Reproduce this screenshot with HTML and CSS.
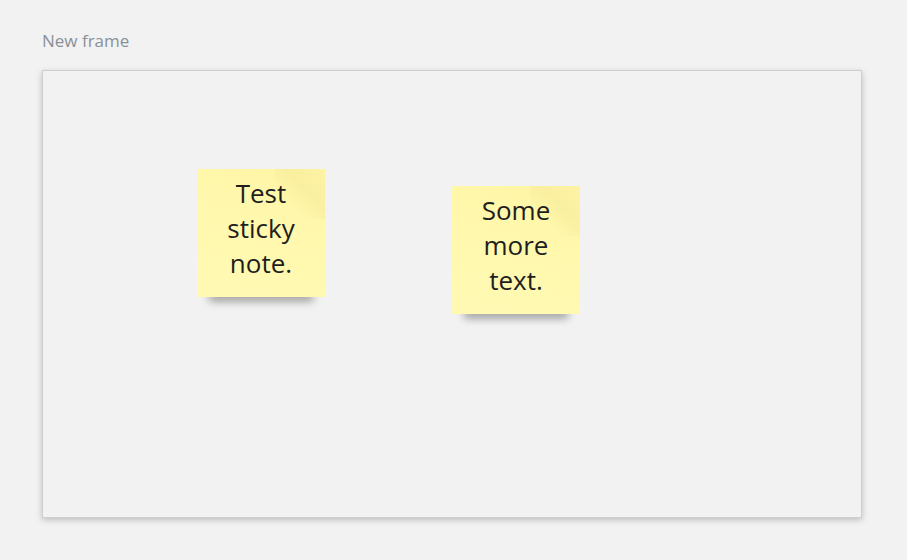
FILE: index.html
```html
<!DOCTYPE html>
<html lang="en">

<head>
    <meta charset="UTF-8">
    <meta name="viewport" content="width=device-width, initial-scale=1.0">
    <title>Board</title>
    <link rel="stylesheet" href="styles.css">
</head>

<body>
    <div class="board">
        <div class="frame-title">New frame</div>
        <div class="frame">
            <!-- stickies sit on a free canvas, so their place is the content -->
            <div class="sticky" style="left: 154px; top: 98px;">
                <span>Test sticky note.</span>
            </div>
            <div class="sticky" style="left: 409px; top: 115px;">
                <span>Some more text.</span>
            </div>
        </div>
    </div>
</body>

</html>
```

FILE: styles.css
```css
* {
    padding: 0;
    margin: 0;
    box-sizing: border-box;
}

html,
body {
    width: 100%;
    height: 100%;
    background-color: #f2f2f2;
    font-family: "Open Sans", "Liberation Sans", sans-serif;
    overflow: hidden;
}

.board {
    padding: 29px 0 0 42px;
}

.frame-title {
    font-size: 17px;
    line-height: 24px;
    color: #8a9099;
    height: 41px;
}

.frame {
    position: relative;
    z-index: 0;
    width: 820px;
    height: 448px;
    background-color: #f2f2f2;
    border: 1px solid #cfcfcf;
    box-shadow: 0 2px 6px rgba(0, 0, 0, 0.22);
}

.sticky {
    position: absolute;
    width: 128px;
    height: 128px;
    padding: 7px 8px;
    display: flex;
    align-items: flex-start;
    justify-content: center;
    text-align: center;
    font-size: 26px;
    line-height: 35px;
    color: #1e1e1e;
    background: linear-gradient(15deg, #fff9b4 0%, #fff8ad 55%, #fff5a6 100%);
}

/* 右上角的折角，非常淡 */
.sticky::before {
    content: "";
    position: absolute;
    top: 0;
    right: 0;
    width: 50px;
    height: 50px;
    background: linear-gradient(225deg, rgba(236, 224, 140, 0.1) 0%, rgba(236, 224, 140, 0.3) 40%, rgba(255, 247, 170, 0) 70%);
}

/* 底部阴影 */
.sticky::after {
    content: "";
    position: absolute;
    left: 12px;
    right: 12px;
    bottom: 5px;
    height: 8px;
    z-index: -1;
    box-shadow: 0 9px 9px rgba(0, 0, 0, 0.4);
}

.sticky span {
    position: relative;
}
```
